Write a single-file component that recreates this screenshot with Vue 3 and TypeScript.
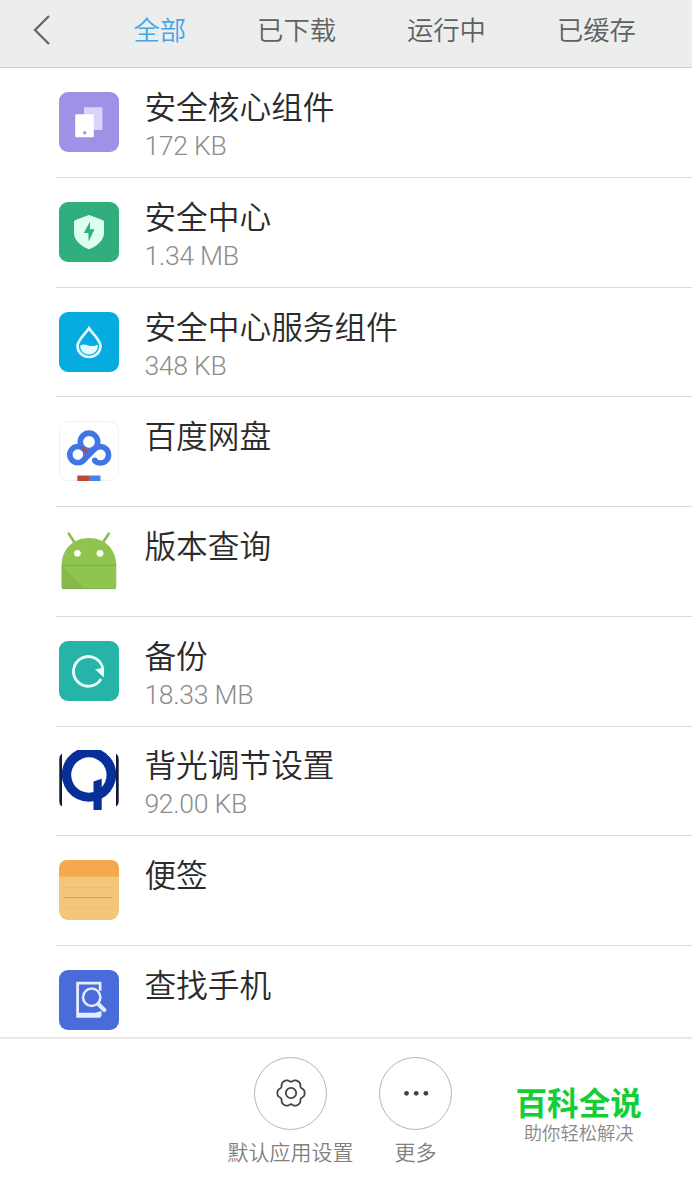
<script setup lang="ts">
interface AppEntry {
  icon: string
  name: string
  size?: string
}

const tabs: string[] = ['全部', '已下载', '运行中', '已缓存']
const activeTab = '全部'

const apps: AppEntry[] = [
  { icon: 'core', name: '安全核心组件', size: '172 KB' },
  { icon: 'shield', name: '安全中心', size: '1.34 MB' },
  { icon: 'drop', name: '安全中心服务组件', size: '348 KB' },
  { icon: 'cloud', name: '百度网盘' },
  { icon: 'android', name: '版本查询' },
  { icon: 'backup', name: '备份', size: '18.33 MB' },
  { icon: 'backlight', name: '背光调节设置', size: '92.00 KB' },
  { icon: 'notes', name: '便签' },
  { icon: 'find', name: '查找手机' },
]

// Six-lobed gear outline around (20, 20); the second harmonic widens the lobes
const gearPath =
  Array.from({ length: 120 }, (_, i) => {
    const a = (i / 120) * Math.PI * 2
    const r = 12.7 + 1.2 * Math.cos(6 * a) - 0.3 * Math.cos(12 * a)
    return `${i ? 'L' : 'M'}${(20 + r * Math.cos(a)).toFixed(2)} ${(20 + r * Math.sin(a)).toFixed(2)}`
  }).join('') + 'Z'
</script>

<template>
  <div class="screen">
    <header class="header">
      <svg class="back" viewBox="0 0 20 32" fill="none" stroke="#666" stroke-width="2.3">
        <path d="M17 2 3 16l14 14" />
      </svg>
      <nav class="tabs">
        <span v-for="t in tabs" :key="t" class="tab" :class="{ active: t === activeTab }">{{ t }}</span>
      </nav>
    </header>

    <main class="list">
      <section v-for="app in apps" :key="app.name" class="row">
        <svg class="icon" viewBox="0 0 60 60">
          <g v-if="app.icon === 'core'">
            <rect width="60" height="60" rx="9" fill="#9f91e5" />
            <rect x="25" y="15.3" width="18.4" height="22.7" rx="1" fill="#dcd2fb" />
            <rect x="16.2" y="22.3" width="18.6" height="22.9" rx="1" fill="#fff" />
            <circle cx="25.7" cy="40.7" r="1.7" fill="#9f91e5" />
          </g>
          <g v-else-if="app.icon === 'shield'">
            <rect width="60" height="60" rx="9" fill="#31ae7d" />
            <path d="M28.500 13.500q1.500-.8 3 0l12 4.500q1.500.6 1.500 2.200V31c0 7-6.500 12.500-13.600 15.800q-1.400.6-2.800 0C21.500 43.500 15 38 15 31V20.200q0-1.600 1.500-2.200Z" fill="#dcfff2" />
            <path d="M31 19.500 24.800 31h4.600l.2 8.500L35.500 27.300h-4.600Z" fill="#31ae7d" />
          </g>
          <g v-else-if="app.icon === 'drop'">
            <rect width="60" height="60" rx="9" fill="#06acdf" />
            <path d="M30 16.300C27 21 18.500 28 18.500 34a11.500 11 0 0 0 23 0C41.500 28 33 21 30 16.300Z" fill="none" stroke="#e2faff" stroke-width="2.700" />
            <path d="M21.300 33.500c3-1.700 5.500-.7 8 0s5.500 1 9.400-.7c.8 5.600-3.600 9.700-8.700 9.700s-9.200-4-8.700-9Z" fill="#e2faff" />
          </g>
          <g v-else-if="app.icon === 'cloud'">
            <rect x=".5" y=".5" width="59" height="59" rx="9" fill="#fff" stroke="#f1f1f1" />
            <g fill="none" stroke="#4076e4" stroke-width="5.600">
              <circle cx="30" cy="20.800" r="8.700" />
              <circle cx="18.900" cy="33.600" r="8.100" />
            </g>
            <path d="m22.600 25 7.800 5.800-4.300 4.600c1-4-1.500-7.500-4.900-8.800Z" fill="#c44337" />
            <path d="M23.500 40.300 35.300 28.300a8.200 8.200 0 1 1 .2 11.300" fill="none" stroke="#4076e4" stroke-width="5.600" />
            <circle cx="35.800" cy="39.200" r="2.800" fill="#4076e4" />
            <path d="M18.300 54.500H30v5.500H18.300Z" fill="#c3463c" />
            <path d="M30 54.500h11.500v5.500H30Z" fill="#4a80e8" />
          </g>
          <g v-else-if="app.icon === 'android'">
            <path d="m9.800 2.700 5.400 8.300M49.700 2.700 44.300 11" stroke="#8db95b" stroke-width="2.600" stroke-linecap="round" />
            <path d="M2.700 34C2.700 18 14.500 7 30 7s27.300 11 27.300 27v21.500q0 2.500-2.500 2.500H5.200q-2.500 0-2.500-2.500Z" fill="#8fc44f" />
            <path d="M2.700 34 26 58H5.200q-2.500 0-2.500-2.500Z" fill="#86b94b" />
            <path d="M2.700 34.300h54.600" stroke="#79ad41" stroke-width="1" />
            <path d="M3.500 57.600h53" stroke="#7eaa4c" stroke-width=".8" />
            <circle cx="18.400" cy="22.300" r="3.400" fill="#fbfff2" />
            <circle cx="41" cy="22.300" r="3.400" fill="#fbfff2" />
          </g>
          <g v-else-if="app.icon === 'backup'">
            <rect width="60" height="60" rx="9" fill="#26b4a9" />
            <path d="M43.800 27.500A14.800 14.800 0 1 0 42 38" fill="none" stroke="#e7fffb" stroke-width="2.800" />
            <path d="m36 28.300 9.200-1.500-.4 9.700Z" fill="#e7fffb" />
          </g>
          <g v-else-if="app.icon === 'backlight'">
            <rect width="60" height="60" rx="9" fill="#fff" />
            <path d="M3 3.500Q.3 5.500.3 9v42q0 4 2.700 5.500ZM57 3.500q2.700 2 2.700 5.500v42q0 4-2.700 5.500Z" fill="#101a3a" />
            <path d="M18.400 0h23.200A27.200 27.200 0 1 1 18.400 0Z" fill="#062f99" />
            <circle cx="29.900" cy="25" r="17.700" fill="#fff" />
            <path d="m34.500 31.500 8.200-2.700V60h-8.200Z" fill="#062f99" />
          </g>
          <g v-else-if="app.icon === 'notes'">
            <rect width="60" height="60" rx="9" fill="#f3c67b" />
            <path d="M0 16.500V9q0-9 9-9h42q9 0 9 9v7.500Z" fill="#f5a84d" />
            <path d="M5 27.500h48M5 47.500h48" stroke="#e8bd77" stroke-width=".8" />
            <path d="M5 37.500h48" stroke="#cfa465" stroke-width="1" />
          </g>
          <g v-else>
            <rect width="60" height="60" rx="9" fill="#4a6cdb" />
            <path d="M17.200 11.700h25.300v9h-2.700v-6.200H20v28.300h16l6.500-1.800v4.800l-1.500 2H17.200Z" fill="#e3ebff" />
            <circle cx="32.700" cy="27.300" r="8.700" fill="#4a6cdb" stroke="#e3ebff" stroke-width="2.500" />
            <path d="m39.300 34 6 6" stroke="#e3ebff" stroke-width="4" stroke-linecap="round" />
          </g>
        </svg>
        <div class="info">
          <div class="name">{{ app.name }}</div>
          <div v-if="app.size" class="size">{{ app.size }}</div>
        </div>
      </section>
    </main>

    <footer class="footer">
      <div class="action">
        <div class="round">
          <svg viewBox="0 0 40 40" fill="none" stroke="#444" stroke-width="1.800">
            <path :d="gearPath" />
            <circle cx="20" cy="20" r="5.200" />
          </svg>
        </div>
        <span class="label">默认应用设置</span>
      </div>
      <div class="action">
        <div class="round">
          <svg viewBox="0 0 40 40" fill="#444">
            <circle cx="10.500" cy="20.300" r="2.400" />
            <circle cx="20.200" cy="20.300" r="2.400" />
            <circle cx="29.900" cy="20.300" r="2.400" />
          </svg>
        </div>
        <span class="label">更多</span>
      </div>
      <div class="brand">
        <strong>百科全说</strong>
        <span>助你轻松解决</span>
      </div>
    </footer>
  </div>
</template>

<style>
body {
  margin: 0;
  background: #fff;
}
</style>

<style scoped>
.screen {
  width: 692px;
  height: 1177px;
  display: flex;
  flex-direction: column;
  overflow: hidden;
  background: #fff;
  font-family: Roboto, "Noto Sans CJK SC", sans-serif;
  font-weight: 350;
  white-space: nowrap;
}
.header {
  box-sizing: border-box;
  flex: none;
  height: 68px;
  display: flex;
  align-items: flex-start;
  background: #eceeed;
  border-bottom: 1px solid #cfd1d0;
}
.back {
  width: 20px;
  height: 32px;
  margin: 14px 0 0 32px;
}
.tabs {
  display: flex;
  gap: 71px;
  margin-left: 81.5px;
  padding-top: 12px;
}
.tab {
  font-size: 26.3px;
  line-height: 38px;
  color: #606060;
}
.tab.active {
  color: #45a5e6;
}
.list {
  flex: 1;
  min-height: 0;
  overflow: hidden;
  padding: 0.4px 0 0 56px;
}
.row {
  box-sizing: border-box;
  height: 109.7px;
  display: flex;
  padding: 23.9px 0 0 3.4px;
  border-bottom: 1px solid #d9d9d9;
}
.icon {
  flex: none;
  width: 60px;
  height: 60px;
}
.info {
  margin: -6px 0 0 25px;
}
.name {
  font-size: 31.7px;
  line-height: 46px;
  color: #2b2b2b;
}
.size {
  margin-top: -2px;
  font-size: 26.600px;
  font-weight: 300;
  letter-spacing: -0.3px;
  line-height: 32px;
  color: #8c8c8c;
}
.footer {
  box-sizing: border-box;
  flex: none;
  height: 140px;
  display: flex;
  align-items: flex-start;
  gap: 25px;
  padding: 18px 0 0 227.500px;
  border-top: 2px solid #e8e8e8;
}
.action {
  display: flex;
  flex-direction: column;
  align-items: center;
  min-width: 74px;
}
.round {
  box-sizing: border-box;
  width: 73px;
  height: 73px;
  display: flex;
  align-items: center;
  justify-content: center;
  border: 1px solid #b5b5b5;
  border-radius: 50%;
}
.round svg {
  width: 40px;
  height: 40px;
  margin-bottom: 1px;
}
.label {
  margin-top: 8px;
  font-size: 21px;
  line-height: 30px;
  color: #808080;
}
.brand {
  display: flex;
  flex-direction: column;
  align-items: center;
  margin: 28px 0 0 38px;
}
.brand strong {
  font-size: 31.600px;
  font-weight: 700;
  line-height: 40px;
  color: #12cf34;
}
.brand span {
  margin-top: -2px;
  font-size: 18.300px;
  line-height: 22px;
  color: #888;
}
</style>
